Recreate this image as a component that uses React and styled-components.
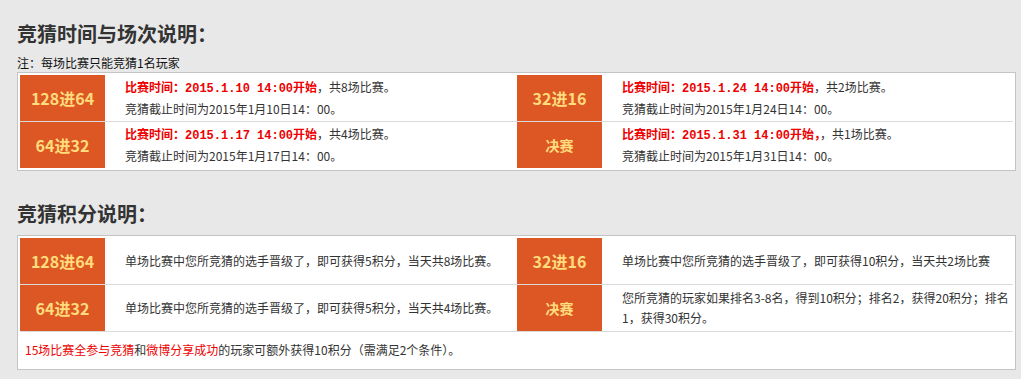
import React from "react";
import styled, { createGlobalStyle } from "styled-components";

const Global = createGlobalStyle`
  html, body { margin: 0; padding: 0; background: #e8e8e8; }
  body { font-family: "Noto Sans CJK SC", "Liberation Sans", sans-serif; font-size: 12px; color: #333; }
`;

const Page = styled.div`
  padding: 20px 5px 8px 17px;
`;

const Title = styled.h2`
  margin: ${(p) => (p.$first ? "0" : "29px 0 0")};
  font-size: 20px;
  line-height: 28px;
  font-weight: bold;
  color: #333;
`;

const Note = styled.div`
  margin-top: 7px;
  line-height: 16px;
  font-size: 12px;
  color: #111;
`;

const Box = styled.div`
  margin-top: ${(p) => p.$mt}px;
  border: 1px solid #c4c4c4;
  background: #fff;
  padding: 2px;
`;

const Row = styled.div`
  display: grid;
  grid-template-columns: 85px 412px 85px 1fr;
  height: 46px;
  & + & {
    border-top: 1px solid #dadada;
  }
`;

const Label = styled.div`
  background: #dd5724;
  color: #ffdc7c;
  display: flex;
  align-items: center;
  justify-content: center;
  font-weight: bold;
  font-size: ${(p) => (p.$small ? 14 : 16)}px;
`;

const TextCell = styled.div`
  padding: 0 4px 0 20px;
  display: flex;
  flex-direction: column;
  justify-content: center;
  line-height: 20px;
  font-size: 12px;
  color: #333;
`;

const Red = styled.span`
  color: #ee0000;
  font-weight: ${(p) => (p.$bold ? "bold" : "normal")};
  font-family: ${(p) =>
    p.$bold ? `"Liberation Mono", "Noto Sans CJK SC", monospace` : "inherit"};
`;

const Footer = styled.div`
  border-top: 1px solid #dadada;
  height: 35px;
  padding-left: 5px;
  display: flex;
  align-items: center;
  font-size: 12px;
  color: #333;
`;

const schedule = [
  [
    { label: "128进64", time: "2015.1.10 14:00开始", rest: "，共8场比赛。", end: "竞猜截止时间为2015年1月10日14：00。" },
    { label: "32进16", time: "2015.1.24 14:00开始", rest: "，共2场比赛。", end: "竞猜截止时间为2015年1月24日14：00。" },
  ],
  [
    { label: "64进32", time: "2015.1.17 14:00开始", rest: "，共4场比赛。", end: "竞猜截止时间为2015年1月17日14：00。" },
    { label: "决赛", small: true, time: "2015.1.31 14:00开始，", rest: "，共1场比赛。", end: "竞猜截止时间为2015年1月31日14：00。" },
  ],
];

const points = [
  [
    { label: "128进64", text: "单场比赛中您所竞猜的选手晋级了，即可获得5积分，当天共8场比赛。" },
    { label: "32进16", text: "单场比赛中您所竞猜的选手晋级了，即可获得10积分，当天共2场比赛" },
  ],
  [
    { label: "64进32", text: "单场比赛中您所竞猜的选手晋级了，即可获得5积分，当天共4场比赛。" },
    { label: "决赛", small: true, text: "您所竞猜的玩家如果排名3-8名，得到10积分；排名2，获得20积分；排名1，获得30积分。" },
  ],
];

export default function App() {
  return (
    <>
      <Global />
      <Page>
        <Title $first>竞猜时间与场次说明：</Title>
        <Note>注：每场比赛只能竞猜1名玩家</Note>
        <Box $mt={1}>
          {schedule.map((row, i) => (
            <Row key={i}>
              {row.map((c) => (
                <React.Fragment key={c.label}>
                  <Label $small={c.small}>{c.label}</Label>
                  <TextCell>
                    <div>
                      <Red $bold>比赛时间：{c.time}</Red>
                      {c.rest}
                    </div>
                    <div>{c.end}</div>
                  </TextCell>
                </React.Fragment>
              ))}
            </Row>
          ))}
        </Box>

        <Title>竞猜积分说明：</Title>
        <Box $mt={7}>
          {points.map((row, i) => (
            <Row key={i}>
              {row.map((c) => (
                <React.Fragment key={c.label}>
                  <Label $small={c.small}>{c.label}</Label>
                  <TextCell>{c.text}</TextCell>
                </React.Fragment>
              ))}
            </Row>
          ))}
          <Footer>
            <Red>15场比赛全参与竞猜</Red>和<Red>微博分享成功</Red>的玩家可额外获得10积分（需满足2个条件）。
          </Footer>
        </Box>
      </Page>
    </>
  );
}
